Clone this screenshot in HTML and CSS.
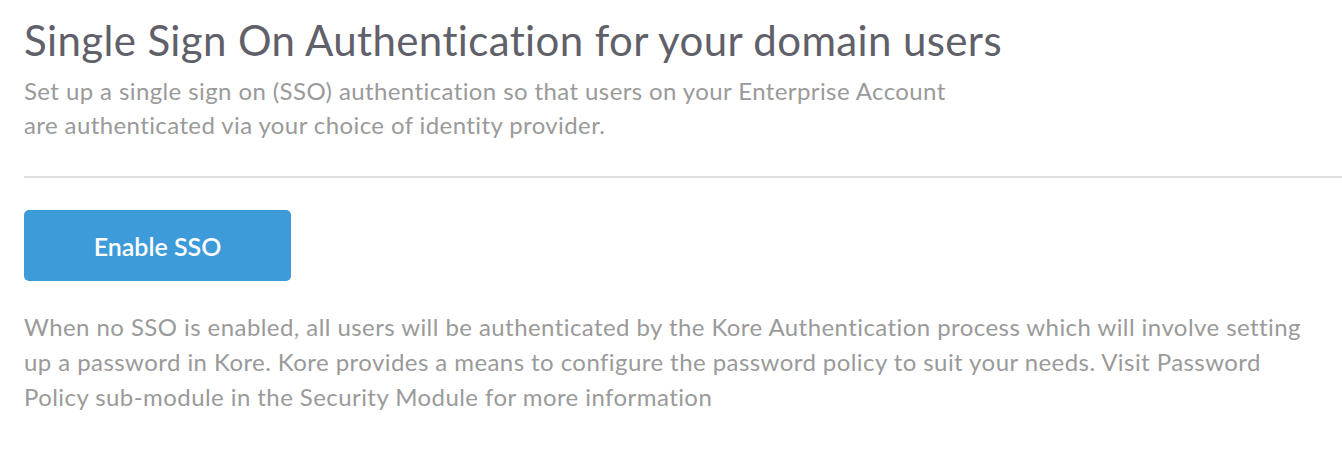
FILE: index.html
```html
<!DOCTYPE html>
<html>
<head>
<meta charset="utf-8">
<link rel="stylesheet" href="styles.css">
</head>
<body>
<div class="page">
  <div class="intro">
    <h1 class="title">Single Sign On Authentication for your domain users</h1>
    <p class="subtitle">Set up a single sign on (SSO) authentication so that users on your Enterprise Account<br>are authenticated via your choice of identity provider.</p>
  </div>
  <hr class="divider">
  <div class="content">
    <button class="btn-enable">Enable SSO</button>
    <p class="note">When no SSO is enabled, all users will be authenticated by the Kore Authentication process which will involve setting up a password in Kore. Kore provides a means to configure the password policy to suit your needs. Visit Password Policy sub-module in the Security Module for more information</p>
  </div>
</div>
</body>
</html>
```
FILE: styles.css
```css
html, body {
  margin: 0;
  padding: 0;
  background: #ffffff;
}
body {
  font-family: Lato, "Open Sans", sans-serif;
}
.page {
  padding: 15px 0 0 24px;
}
.intro {
  padding-right: 24px;
}
.title {
  margin: 0;
  font-size: 42px;
  font-weight: 400;
  line-height: 50px;
  letter-spacing: 0.37px;
  color: #5f6069;
}
.subtitle {
  margin: 9px 0 0;
  font-size: 24px;
  line-height: 34px;
  letter-spacing: 0.4px;
  color: #9a9a9a;
}
.divider {
  margin: 34px 0 0;
  border: 0;
  border-top: 2px solid #dedede;
  height: 0;
}
.content {
  padding-right: 24px;
}
.btn-enable {
  display: block;
  margin-top: 32px;
  width: 267px;
  height: 71px;
  border: 0;
  border-radius: 5px;
  background: #3d9bda;
  color: #ffffff;
  font-family: Lato, sans-serif;
  font-size: 25px;
  font-weight: 600;
  cursor: pointer;
}
.note {
  margin: 28px 0 0;
  font-size: 24px;
  line-height: 35px;
  letter-spacing: 0.43px;
  color: #9a9a9a;
}
```
